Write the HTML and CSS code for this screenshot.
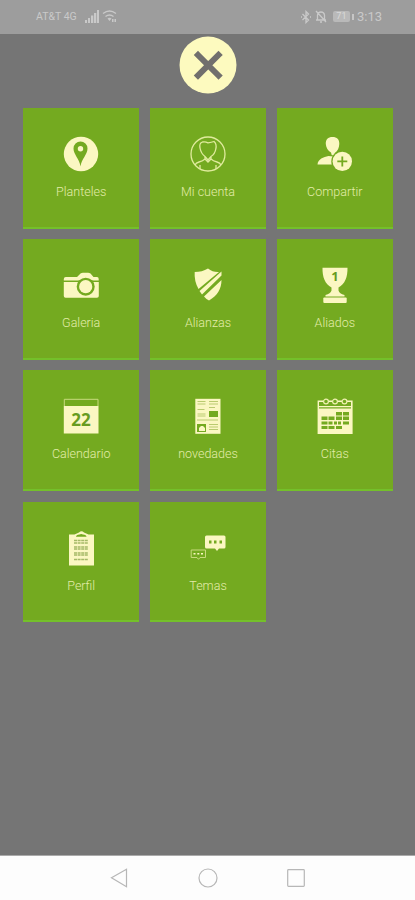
FILE: index.html
```html
<!DOCTYPE html>
<html lang="es">
<head>
<meta charset="utf-8">
<title>Menú</title>
<link rel="stylesheet" href="styles.css">
</head>
<body>
<header class="status">
  <div class="status-side left">
    <span class="carrier">AT&amp;T 4G</span>
    <svg class="signal" width="14" height="13" viewBox="0 0 14 13"><path d="M0 10h2v3H0zM3 8h2v5H3zM6 5.500h2.300V13H6zM9 3h2.300v10H9zM12 0h2v13h-2z"/></svg>
    <svg class="wifi" width="15" height="13" viewBox="0 0 15 13"><path class="line" d="M1 3.500Q7.500-1.500 14 3.500M3.500 6.500q4-3 8 0"/><path d="M5.500 8.500q2-1.300 4 0L7.500 11zM10 9h1.500v3H10zM12.500 9H14v3h-1.500z"/></svg>
  </div>
  <div class="status-side right">
    <svg width="10" height="14" viewBox="0 0 10 14"><path class="line" d="M1.500 4l6 6L5 12.500v-11L7.500 4l-6 6M0 7h1M9 7h1"/></svg>
    <svg class="bell" width="12" height="13" viewBox="0 0 12 13"><path class="line" d="M2.500 9.500V5Q3 2 6 2t3.500 3v4.500M1 10h10M5 12h2M1 1l10 11"/></svg>
    <span class="battery">71</span><span class="battery-tip"></span>
    <span class="time">3:13</span>
  </div>
</header>
<main class="menu">
  <button class="close" aria-label="Cerrar"><svg width="58" height="58" viewBox="0 0 58 58"><circle cx="29" cy="29" r="28.500"/><path d="M19 19l20.500 20.500M39.500 19L19 39.500"/></svg></button>
  <nav class="grid">
    <a class="tile"><svg class="icon" viewBox="0 0 36 36"><circle cx="18" cy="18" r="17.200"/><path class="g" d="M17.500 30.500C16.500 23 10.500 18.500 10.500 12.500a7 7 0 0 1 14 0c0 6-6 10.500-7 18z"/><circle cx="17.500" cy="12.800" r="2.700"/></svg><span>Planteles</span></a>
    <a class="tile"><svg class="icon stroke" viewBox="0 0 36 36"><circle cx="18" cy="18" r="17"/><path d="M10 12Q9 7 12.500 6q3-.5 5.500.8 3.500-.3 6-1.300 3 2.500 1.800 7.500-.8 5-4.800 7.500L18 24l-3-3.500q-4-3-5-8.500zM15 20.500V23q-2 2-6 3-3 .8-4 3M21 20.500V23q2 2 6 3 3 .8 4 3M15 23l3 3 3-3M10 33v-4M26 33v-4"/></svg><span>Mi cuenta</span></a>
    <a class="tile"><svg class="icon" viewBox="0 0 36 36"><path d="M15.500 1C20 1 22.500 3.500 22.300 8c-.2 4-1.600 7-4.300 9l-.3 3-3-1-.7-2.500C11 15 9 11.500 8.800 8 8.600 3.500 11 1 15.500 1zM.5 28.500c.5-5.500 6-7.500 11-8.500l5 .5q-2 4-1 8z"/><circle class="g" cx="25.300" cy="25.400" r="11"/><circle cx="25.300" cy="25.400" r="9.700"/><path class="gs" d="M25.300 20.400v10M20.300 25.400h10"/></svg><span>Compartir</span></a>
    <a class="tile"><svg class="icon" viewBox="0 0 36 36"><path d="M.8 12q0-2 2-2H14l3.500-3.500q1-.8 2.500-.8h5q1.500 0 2.500.8L30.500 10H34q1.700 0 1.700 2v1.500H.8zM.8 15h35v14q0 1.800-1.800 1.800H2.600Q.8 30.800.8 29z"/><circle class="g" cx="22.700" cy="19.700" r="9"/><circle cx="22.700" cy="19.700" r="6.600"/></svg><span>Galeria</span></a>
    <a class="tile"><svg class="icon" viewBox="0 0 36 36"><path d="M18 1.500q5 4 11 3.500L8.500 22Q4 14 4.700 5 12 5 18 1.500zM31.500 4.500v4L12 27.500 9.500 24zM31.500 13c0 9-4 15.500-12.500 20.500q-3-1.500-5-4z"/></svg><span>Alianzas</span></a>
    <a class="tile"><svg class="icon" viewBox="0 0 36 36"><path d="M5.500.8h25c.2 9-2.500 16.700-9 19.700v3q.8 3 6 4.500v1.500h-19V28q5-1.500 6-4.500v-3C8 17.500 5.300 9.800 5.500.8z"/><rect x="6.300" y="30.500" width="23.400" height="5.500" rx="1"/><text class="digit" x="18" y="14">1</text></svg><span>Aliados</span></a>
    <a class="tile"><svg class="icon" viewBox="0 0 36 36"><path d="M.8 8h34.700v27.500H.8z"/><path class="thin" d="M1.300 8V1.300H35V8"/><text class="date" x="18" y="27.500">22</text></svg><span>Calendario</span></a>
    <a class="tile"><svg class="icon" viewBox="0 0 36 36"><path d="M5.300.8h25.200v35H5.300z"/><path class="g" d="M19 13h9v6h-9zM7 26h9v8H7z"/><path class="faint" d="M7.500 3.500h8M7.500 6h8M19 3.500h9M19 6h9M7.500 11.500h7M19 9.500h6M7.500 16h8M7.500 18h8M7 22h21M19 26.500h9M19 29h9M19 31.500h9"/><path d="M9 33v-3l2-2h2l2 2v3z"/></svg><span>novedades</span></a>
    <a class="tile"><svg class="icon" viewBox="0 0 36 36"><path d="M.6 2.500h35V36H.6z"/><path class="g" d="M2 4h32v4H2zM2 9.200h32v1.300H2z"/><g class="ring"><circle cx="9" cy="3.500" r="2.400"/><circle cx="18" cy="3.500" r="2.400"/><circle cx="27.500" cy="3.500" r="2.400"/></g><path class="g" d="M19 14h6v3.500h-6zM26 14h6v3.500h-6zM4.500 18.500h6V22h-6zM11.500 18.500h6V22h-6zM19 18.500h6V22h-6zM26 18.500h6V22h-6zM4.500 23.500h6v3h-6zM11.500 23.500h4v3h-4zM17 23.500h3v3h-3zM21 23.500h3v3h-3zM26 23.500h6v3h-6zM4.500 28h6v3h-6zM11.500 28h6v3h-6zM19 28h6v3h-6z"/></svg><span>Citas</span></a>
    <a class="tile"><svg class="icon" viewBox="0 0 36 36"><path d="M6 4.500h5.500L16 2.500q2.500-2.500 5 0l4.500 2H31v31H6z"/><path class="g" d="M13 6.800q0-1.800 3.500-2.300 1.700-1 3.400 0 3.600.5 3.600 2.300z"/><path class="notes" d="M11 10.500h14M11 13h14M11 17h14M11 19h14M11 23h14M11 25h14M11 29.500h14"/></svg><span>Perfil</span></a>
    <a class="tile"><svg class="icon" viewBox="0 0 36 36"><path d="M16.500 5.500H34q1.500 0 1.500 1.500v10q0 1.500-1.500 1.500h-5L27 21l-2-2.500h-8.500Q15 18.500 15 17V7q0-1.500 1.500-1.500z"/><path class="thin" d="M1.200 20h14.300v7.500H10l-1.500 1.800L7 27.500H1.200z"/><path class="g" d="M19 10.500h2.500v3H19zM24 10.500h2.500v3H24zM29.500 10.500H32v3h-2.500z"/><path d="M3.500 23h2v1.500h-2zM7.300 23h2v1.500h-2zM11 23h2v1.500h-2z"/></svg><span>Temas</span></a>
  </nav>
</main>
<footer class="navbar">
  <svg width="20" height="22" viewBox="0 0 20 22"><path d="M16.500 2.200v17.500L1.500 10.800z"/></svg>
  <svg width="20" height="20" viewBox="0 0 20 20"><circle cx="10" cy="10" r="9"/></svg>
  <svg width="20" height="20" viewBox="0 0 20 20"><rect x="1.700" y="1.700" width="16.600" height="16.600" rx=".8"/></svg>
</footer>
</body>
</html>
```
FILE: styles.css
```css
* { box-sizing: border-box; }
body {
  margin: 0;
  height: 900px;
  display: flex;
  flex-direction: column;
  overflow: hidden;
  background: #757575;
  font-family: Roboto, "Liberation Sans", sans-serif;
}
.status {
  height: 33.500px;
  flex: none;
  padding: 0 33px 0 36px;
  display: flex;
  justify-content: space-between;
  align-items: center;
  background: #9d9d9d;
  color: #c9c9c9;
}
.status-side { display: flex; align-items: center; }
.status svg { fill: #c9c9c9; flex: none; }
.status .line { fill: none; stroke: #c9c9c9; stroke-width: 1.300; }
.carrier { font-size: 10.500px; width: 49px; white-space: nowrap; }
.wifi { margin-left: 3px; }
.bell { margin: 0 6px 0 4px; }
.battery {
  width: 17px;
  height: 11px;
  border-radius: 2px;
  background: #b9b9b9;
  color: #dadada;
  font-size: 9px;
  line-height: 11px;
  text-align: center;
}
.battery-tip { width: 2px; height: 6px; margin: 0 3px 0 2px; background: #c6c6c6; }
.time { font-size: 13px; }
.menu { flex: 1; display: flex; flex-direction: column; align-items: center; }
.close { margin: 2px 0 0; padding: 0; border: 0; background: none; height: 58px; }
.close svg { display: block; fill: #fdfabf; }
.close path { fill: none; stroke: #716f6d; stroke-width: 6; stroke-linecap: square; }
.grid {
  margin: 14.500px 0 0 1px;
  display: grid;
  grid-template-columns: repeat(3, 115.500px);
  grid-auto-rows: 120.500px;
  gap: 10.700px 11.300px;
}
.tile {
  display: flex;
  flex-direction: column;
  align-items: center;
  padding-top: 28px;
  background: #74aa20;
  border-bottom: 2px solid #74c02a;
  color: #e3ecaa;
  font-size: 12.500px;
  font-weight: 300;
  line-height: 16px;
}
.tile span { margin-top: 12px; }
.icon { width: 36px; height: 36px; flex: none; fill: #fbf7c2; }
.icon .g { fill: #74aa20; }
.icon .gs { fill: none; stroke: #74aa20; stroke-width: 1.800; }
.stroke { fill: none; stroke: #e0eb9d; stroke-width: 1.300; }
.thin { fill: none; stroke: #c9da7f; stroke-width: 1; }
.ring { fill: #74aa20; stroke: #f0f0b0; stroke-width: 1.200; }
.faint { fill: none; stroke: #bacb70; stroke-width: 1; }
.notes { fill: none; stroke: #a5b967; stroke-width: 1.500; stroke-dasharray: 3 .6; }
.digit, .date { fill: #679c1f; font-family: "Open Sans", sans-serif; font-weight: 700; text-anchor: middle; }
.digit { font-size: 13px; }
.date { font-size: 17px; }
.navbar {
  height: 45.500px;
  flex: none;
  display: flex;
  justify-content: center;
  align-items: center;
  gap: 68px;
  background: #fdfdfd;
  border-top: 1px solid #aaa;
}
.navbar svg { fill: none; stroke: #b7b7b7; stroke-width: 1.200; }
```
